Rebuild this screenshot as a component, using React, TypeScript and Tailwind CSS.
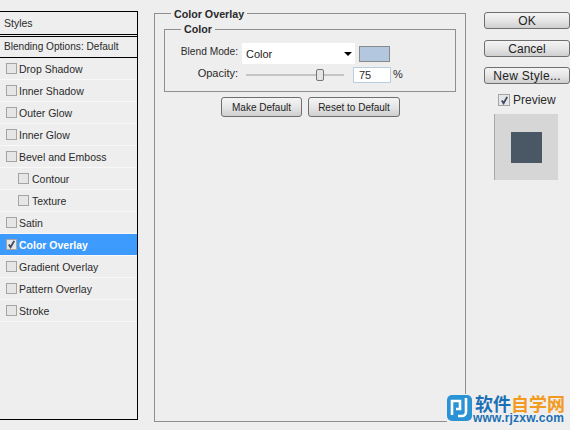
const rows = [
  { label: "Drop Shadow" },
  { label: "Inner Shadow" },
  { label: "Outer Glow" },
  { label: "Inner Glow" },
  { label: "Bevel and Emboss" },
  { label: "Contour", sub: true },
  { label: "Texture", sub: true },
  { label: "Satin" },
  { label: "Color Overlay", active: true },
  { label: "Gradient Overlay" },
  { label: "Pattern Overlay" },
  { label: "Stroke" },
];

function Check({ checked, size }: { checked?: boolean; size: string }) {
  return (
    <span className={"flex shrink-0 items-center justify-center border border-[#a4a4a4] bg-[#e6e6e6] " + size}>
      {checked && (
        <svg viewBox="0 0 10 10" className="h-[9px] w-[9px]" fill="none" stroke="#3b4a63" strokeWidth="2">
          <path d="M2 5l2 3 4-7" />
        </svg>
      )}
    </span>
  );
}

function Btn({ children, className }: { children: React.ReactNode; className: string }) {
  return (
    <div className={"flex items-center justify-center rounded-[3px] border border-[#6f6f6f] bg-gradient-to-b from-[#f4f4f4] via-[#e6e6e6] to-[#cfcfcf] text-[#222] " + className}>
      {children}
    </div>
  );
}

export default function App() {
  return (
    <div className="relative flex h-[430px] w-[570px] overflow-hidden bg-[#eeeeee] font-['Liberation_Sans',sans-serif] text-[11px] text-[#2a2a2a]">
      {/* styles list */}
      <div className="mt-[11px] mb-[10px] flex w-[138px] shrink-0 flex-col border-t border-r border-b border-black text-[10.5px]">
        <div className="flex h-[22px] items-center pl-[4px] leading-none">Styles</div>
        <div className="h-[3px] border-y border-black" />
        <div className="flex h-[21px] items-center border-b border-black pl-[4px] text-[10.1px] leading-none">Blending Options: Default</div>
        {rows.map((r) => (
          <div
            key={r.label}
            className={
              "flex h-[22px] items-center border-b border-[#f8f8f8] " +
              (r.sub ? "gap-[3px] pl-[18px] " : "gap-[2px] pl-[6px] ") +
              (r.active ? "bg-[#3c9bfc] font-bold text-white" : "")
            }
          >
            <Check checked={r.active} size="h-[11px] w-[11px]" />
            <span className="pt-[2px] leading-none">{r.label}</span>
          </div>
        ))}
      </div>

      {/* main panel */}
      <div className="mt-[13px] mb-[8px] ml-[16px] w-[312px] shrink-0 border border-[#8f8f8f]">
        <div className="mx-[9px] mt-[15px] h-[63px] border border-[#8f8f8f]">
          <div className="mt-[13px] flex h-[21px] items-center">
            <span className="w-[73px] pb-[4px] text-right text-[10.2px]">Blend Mode:</span>
            <div className="ml-[4px] flex h-[21px] w-[113px] items-center justify-between bg-white pr-[3px] pl-[4px] text-[#222]">
              <span className="pt-[2px]">Color</span>
              <span className="h-0 w-0 border-x-[4px] border-t-[4px] border-x-transparent border-t-black" />
            </div>
            <div className="ml-[4px] h-[16px] w-[31px] border border-[#8a8a8a] bg-[#b3c7de]" />
          </div>
          <div className="mt-[2px] flex h-[17px] items-center">
            <span className="w-[73px] pb-[2px] text-right">Opacity:</span>
            <div className="relative ml-[8px] h-[2px] w-[98px] bg-[#c4c4c4]">
              <span className="absolute -top-[5px] left-[70px] h-[12px] w-[8px] rounded-[2px] border border-[#777] bg-[#e4e4e4]" />
            </div>
            <div className="ml-[9px] flex h-[16px] w-[38px] items-center border border-[#b9cfe0] bg-white pt-[2px] pl-[5px]">75</div>
            <span className="ml-[2px] pb-[1px]">%</span>
          </div>
        </div>
        <div className="mt-[5px] flex gap-[6px] pl-[66px] text-[10px]">
          <Btn className="h-[20px] w-[81px]">Make Default</Btn>
          <Btn className="h-[20px] w-[92px]">Reset to Default</Btn>
        </div>
      </div>

      {/* legends */}
      <span className="absolute top-[6px] left-[171px] bg-[#eeeeee] px-[3px] text-[10.7px] font-bold">Color Overlay</span>
      <span className="absolute top-[21px] left-[181px] bg-[#eeeeee] px-[3px] text-[10.7px] font-bold">Color</span>

      {/* right column */}
      <div className="mt-[12px] ml-[18px] flex w-[86px] shrink-0 flex-col items-start">
        <Btn className="h-[17px] w-[86px] border-[#4fa8d8] text-[12px]">OK</Btn>
        <Btn className="mt-[11px] h-[17px] w-[86px] text-[12px]">Cancel</Btn>
        <Btn className="mt-[10px] h-[17px] w-[86px] text-[12px] tracking-[0.3px]">New Style...</Btn>
        <div className="mt-[10px] ml-[14px] flex h-[12px] items-center gap-[3px] text-[12px] leading-none">
          <Check checked size="h-[12px] w-[12px] border-[#7f93b8]" />
          Preview
        </div>
        <div className="mt-[8px] ml-[10px] flex h-[66px] w-[64px] items-center justify-center border-l border-[#a8a8a8] bg-[#d6d6d6]">
          <div className="h-[31px] w-[31px] bg-[#4a5866]" />
        </div>
      </div>

      {/* watermark */}
      <div className="absolute right-[5px] bottom-[6px] flex items-start gap-[2px] bg-[#eeeeee]">
        <svg viewBox="0 0 26 26" className="mt-[1px] h-[26px] w-[26px]">
          <rect x="0" y="0" width="25" height="26" rx="5" fill="#2a93d5" />
          <path d="M5 20V6h8v8H9" fill="none" stroke="#fff" strokeWidth="2.6" />
          <path d="M19 3v14a4 4 0 0 1-4 4h-4" fill="none" stroke="#fff" strokeWidth="2.6" />
        </svg>
        <div className="flex flex-col">
          <div className="flex font-['Noto_Sans_CJK_SC',sans-serif] text-[18px] leading-[18px] font-bold">
            <span className="text-[#1b6fb5]">软件</span>
            <span className="text-[#f39a21]">自学网</span>
          </div>
          <span className="-ml-[2px] font-['Liberation_Sans',sans-serif] text-[12px] leading-[12px] font-bold tracking-[0.2px] text-[#1b6fb5]">www.rjzxw.com</span>
        </div>
      </div>
    </div>
  );
}
